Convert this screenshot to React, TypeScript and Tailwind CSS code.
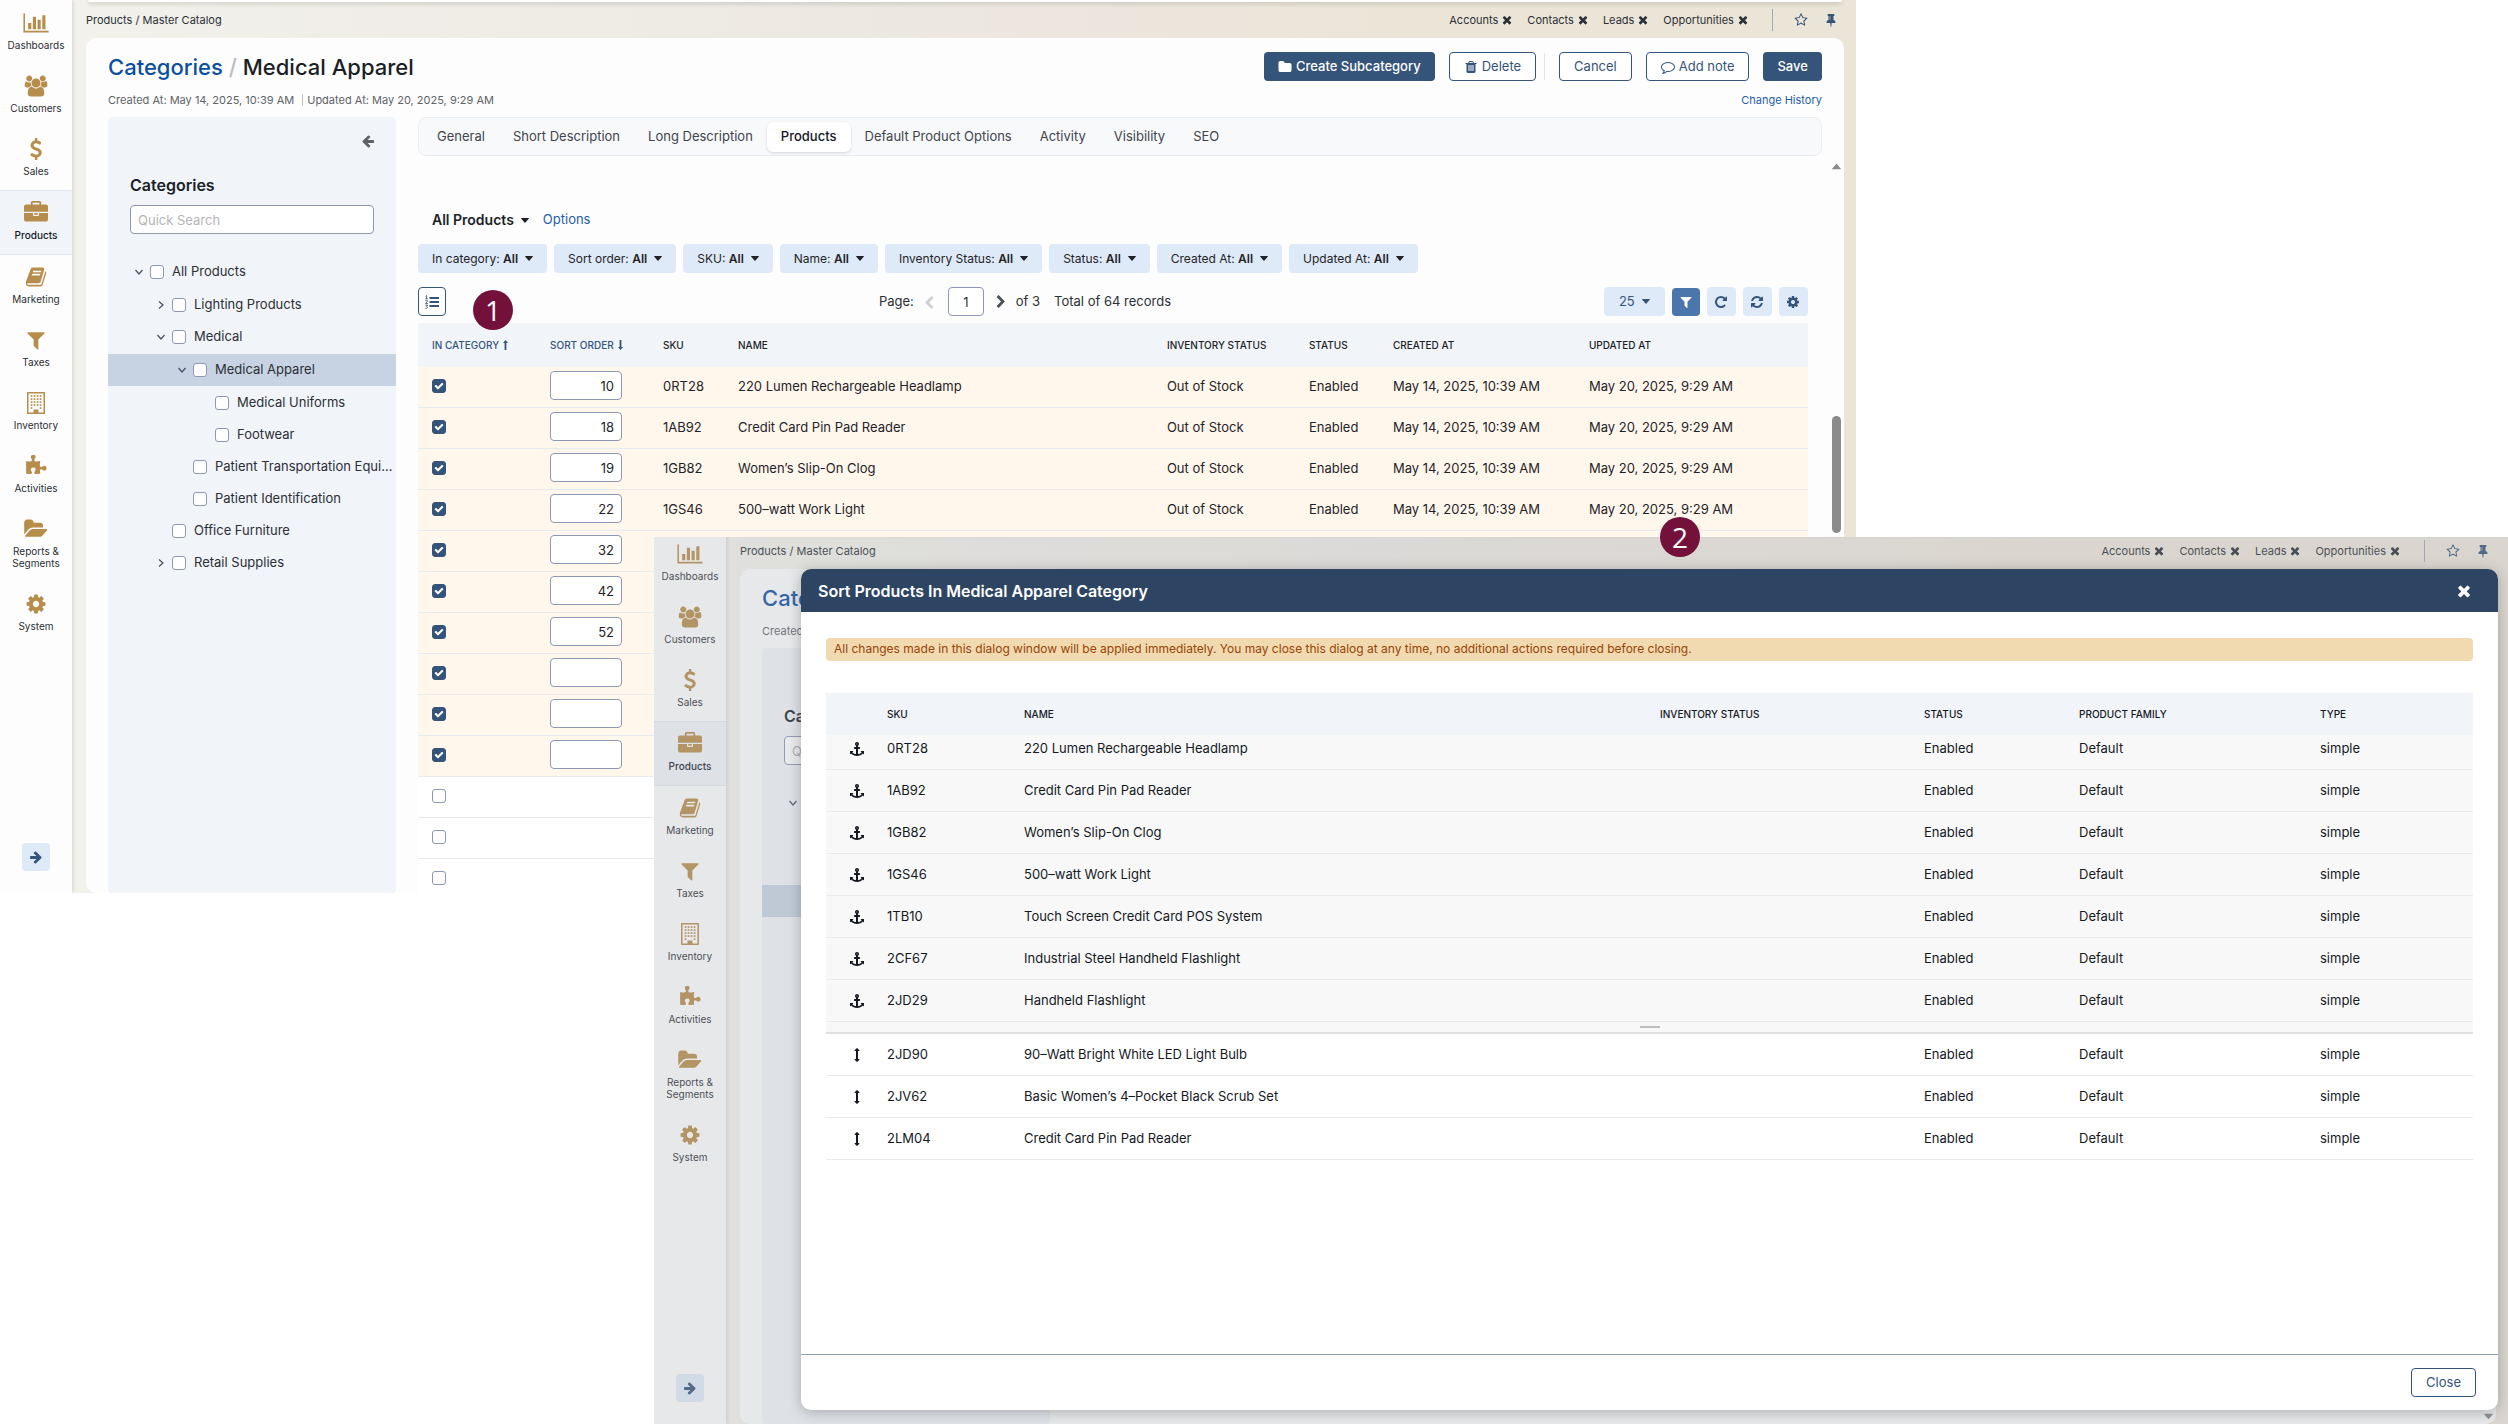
import React, { useId } from "react";

/* ---------- icons ---------- */

type GlyphName =
  | "chart" | "users" | "usd" | "briefcase" | "book" | "filter" | "puzzle" | "folderOpen" | "cog"
  | "arrow" | "close" | "pin" | "trash" | "anchor" | "repeat" | "refresh" | "star" | "folder"
  | "comment" | "chevron" | "arrowsV" | "check";

const GLYPHS: Record<GlyphName, { box: string; d: string }> = {
  chart: { box: "0 0 2048 1792", d: "M640 896v512h-256v-512h256zm384-512v1024h-256v-1024h256zm1024 1152v128h-2048v-1536h128v1408h1920zm-640-896v768h-256v-768h256zm384-384v1152h-256v-1152h256z" },
  users: { box: "0 0 2048 1792", d: "M657 896q-162 5-265 128h-134q-82 0-138-40.5t-56-118.5q0-353 124-353 6 0 43.5 21t97.5 42.5 119 21.5q67 0 133-23-5 37-5 66 0 159 90 290zm1071 637q0 120-73 189.5t-194 69.5h-874q-121 0-194-69.5t-73-189.5q0-53 3.5-103.5t14-109 26.5-108.5 43-97.5 62-81 85.5-53.5 111.5-20q10 0 43 21.5t73 48 107 48 135 21.5 135-21.5 107-48 73-48 43-21.5q61 0 111.5 20t85.5 53.5 62 81 43 97.5 26.5 108.5 14 109 3.5 103.5zm-1024-1277q0 106-75 181t-181 75-181-75-75-181 75-181 181-75 181 75 75 181zm704 384q0 159-112.5 271.5t-271.5 112.5-271.5-112.5-112.5-271.5 112.5-271.5 271.5-112.5 271.5 112.5 112.5 271.5zm576 225q0 78-56 118.5t-138 40.5h-134q-103-123-265-128 90-131 90-290 0-29-5-66 66 23 133 23 59 0 119-21.5t97.5-42.5 43.5-21q124 0 124 353zm-128-609q0 106-75 181t-181 75-181-75-75-181 75-181 181-75 181 75 75 181z" },
  usd: { box: "0 0 1792 1792", d: "M1362 1185q0 153-99.5 263.5t-258.5 136.5v175q0 14-9 23t-23 9h-135q-13 0-22.5-9.5t-9.5-22.5v-175q-66-9-127.5-31t-101.5-44.5-74-48-46.5-37.5-17.5-18q-17-21-2-41l103-135q7-10 23-12 15-2 24 9l2 2q113 99 243 125 37 8 74 8 81 0 142.5-43t61.5-122q0-28-15-53t-33.5-42-58.5-37.5-66-32-80-32.5q-39-16-61.5-25t-61.5-26.5-62.5-31-56.5-35.5-53.5-42.5-43.5-49-35.5-58-21-66.5-8.5-78q0-138 98-242t255-134v-180q0-13 9.5-22.5t22.5-9.5h135q14 0 23 9t9 23v176q57 6 110.5 23t87 33.5 63.5 37.5 39 29 15 14q17 18 5 38l-81 146q-8 15-23 16-14 3-27-7-3-3-14.5-12t-39-26.5-58.5-32-74.5-26-85.5-11.5q-95 0-155 43t-60 111q0 26 8.5 48t29.5 41.5 39.5 33 56 31 60.5 27 70 27.5q53 20 81 31.5t76 35 75.5 42.5 62 50 53 63.5 31.5 76.5 13 94z" },
  briefcase: { box: "0 0 1792 1792", d: "M640 256h512v-128h-512v128zm1152 640v480q0 66-47 113t-113 47h-1472q-66 0-113-47t-47-113v-480h672v160q0 26 19 45t45 19h320q26 0 45-19t19-45v-160h672zm-768 0v128h-256v-128h256zm768-480v384h-1792v-384q0-66 47-113t113-47h352v-160q0-40 28-68t68-28h576q40 0 68 28t28 68v160h352q66 0 113 47t47 113z" },
  book: { box: "0 0 1792 1792", d: "M1703 478q40 57 18 129l-275 906q-19 64-76.5 107.5t-122.5 43.5h-923q-77 0-148.5-53.5t-99.5-131.5q-24-67-2-127 0-4 3-27t4-37q1-8-3-21.5t-3-19.5q2-11 8-21t16.5-23.5 16.5-23.5q23-38 45-91.5t30-91.5q3-10 .5-30t-.5-28q3-11 17-28t17-23q21-36 42-92t25-90q1-9-2.5-32t.5-28q4-13 22-30.5t22-22.5q19-26 42.5-84.5t27.5-96.5q1-8-3-25.5t-2-26.5q2-8 9-18t18-23 17-21q8-12 16.5-30.5t15-35 16-36 19.5-32 26.5-23.5 36-11.5 47.5 5.5l-1 3q38-9 51-9h761q74 0 114 56t18 130l-274 906q-36 119-71.5 153.5t-128.5 34.5h-869q-27 0-38 15-11 16-1 43 24 70 144 70h923q29 0 56-15.5t35-41.5l300-987q7-22 5-57 38 15 59 43zm-1064 2q-4 13 2 22.5t20 9.5h608q13 0 25.5-9.5t16.5-22.5l21-64q4-13-2-22.5t-20-9.5h-608q-13 0-25.5 9.5t-16.5 22.5zm-83 256q-4 13 2 22.5t20 9.5h608q13 0 25.5-9.5t16.5-22.5l21-64q4-13-2-22.5t-20-9.5h-608q-13 0-25.5 9.5t-16.5 22.5z" },
  filter: { box: "0 0 1792 1792", d: "M1595 295q17 41-14 70l-493 493v742q0 42-39 59-13 5-25 5-27 0-45-19l-256-256q-19-19-19-45v-486l-493-493q-31-29-14-70 17-39 59-39h1280q42 0 59 39z" },
  puzzle: { box: "0 0 1792 1792", d: "M1755 1083q0 81-44.5 135t-123.5 54q-41 0-77.5-17.5t-59-38-56.5-38-71-17.5q-110 0-110 124 0 39 16 115t15 115v5q-22 0-33 1-34 3-97.5 11.5t-115.5 13.5-98 5q-61 0-103-26.5t-42-83.5q0-37 17.5-71t38-56.5 38-59 17.5-77.5q0-79-54-123.5t-135-44.5q-84 0-143 45.5t-59 127.5q0 43 15 83t33.5 64.5 33.5 53 15 50.5q0 45-46 89-37 35-117 35-95 0-245-24-9-2-27.5-4t-27.5-4l-13-2q-1 0-3-1-2 0-2-1v-1024q2 1 17.5 3.5t34 5 21.5 3.5q150 24 245 24 80 0 117-35 46-44 46-89 0-22-15-50.5t-33.5-53-33.5-64.5-15-83q0-82 59-127.5t144-45.5q80 0 134 44.5t54 123.5q0 41-17.5 77.5t-38 59-38 56.5-17.5 71q0 57 42 83.5t103 26.5q64 0 180-15t163-17v2q-1 2-3.5 17.5t-5 34-3.5 21.5q-24 150-24 245 0 80 35 117 44 46 89 46 22 0 50.5-15t53-33.5 64.5-33.5 83-15q82 0 127.5 59t45.5 143z" },
  folderOpen: { box: "0 0 1920 1792", d: "M1879 952q0 31-31 66l-336 396q-43 51-120.5 86.5t-143.5 35.5h-1088q-34 0-60.5-13t-26.5-43q0-31 31-66l336-396q43-51 120.5-86.5t143.5-35.5h1088q34 0 60.5 13t26.5 43zm-343-344v160h-832q-94 0-197 47.5t-164 119.5l-337 396-5 6q0-4-.5-12.5t-.5-12.5v-960q0-92 66-158t158-66h320q92 0 158 66t66 158v32h544q92 0 158 66t66 158z" },
  cog: { box: "0 0 1792 1792", d: "M1152 896q0-106-75-181t-181-75-181 75-75 181 75 181 181 75 181-75 75-181zm512-109v222q0 12-8 23t-20 13l-185 28q-19 54-39 91 35 50 107 138 10 12 10 25t-9 23q-27 37-99 108t-94 71q-12 0-26-9l-138-108q-44 23-91 38-16 136-29 186-7 28-36 28h-222q-14 0-24.5-8.5t-11.5-21.5l-28-184q-49-16-90-37l-141 107q-10 9-25 9-14 0-25-11-126-114-165-168-7-10-7-23 0-12 8-23 15-21 51-66.5t54-70.5q-27-50-41-99l-183-27q-13-2-21-12.5t-8-23.5v-222q0-12 8-23t19-13l186-28q14-46 39-92-40-57-107-138-10-12-10-24 0-10 9-23 26-36 98.5-107.5t94.5-71.5q13 0 26 10l138 107q44-23 91-38 16-136 29-186 7-28 36-28h222q14 0 24.5 8.5t11.5 21.5l28 184q49 16 90 37l142-107q9-9 24-9 13 0 25 10 129 119 165 170 7 8 7 22 0 12-8 23-15 21-51 66.5t-54 70.5q26 50 41 98l183 28q13 2 21 12.5t8 23.5z" },
  arrow: { box: "0 0 1792 1792", d: "M1600 960q0 54-37 91l-651 651q-39 37-91 37-51 0-90-37l-75-75q-38-38-38-91t38-91l293-293h-704q-52 0-84.5-37.5t-32.5-90.5v-128q0-53 32.5-90.5t84.5-37.5h704l-293-294q-38-36-38-90t38-90l75-75q38-38 90-38 53 0 91 38l651 651q37 35 37 90z" },
  close: { box: "180 200 1432 1432", d: "M1490 1322q0 40-28 68l-136 136q-28 28-68 28t-68-28l-294-294-294 294q-28 28-68 28t-68-28l-136-136q-28-28-28-68t28-68l294-294-294-294q-28-28-28-68t28-68l136-136q28-28 68-28t68 28l294 294 294-294q28-28 68-28t68 28l136 136q28 28 28 68t-28 68l-294 294 294 294q28 28 28 68z" },
  pin: { box: "0 0 1536 1792", d: "M800 864v-448q0-14-9-23t-23-9-23 9-9 23v448q0 14 9 23t23 9 23-9 9-23zm672 352q0 26-19 45t-45 19h-429l-51 483q-2 12-10.5 20.5t-20.5 8.5h-1q-27 0-32-27l-76-485h-404q-26 0-45-19t-19-45q0-123 78.5-221.5t177.5-98.5v-512q-52 0-90-38t-38-90 38-90 90-38h640q52 0 90 38t38 90-38 90-90 38v512q99 0 177.5 98.5t78.5 221.5z" },
  trash: { box: "0 0 1792 1792", d: "M704 1376v-704q0-14-9-23t-23-9h-64q-14 0-23 9t-9 23v704q0 14 9 23t23 9h64q14 0 23-9t9-23zm256 0v-704q0-14-9-23t-23-9h-64q-14 0-23 9t-9 23v704q0 14 9 23t23 9h64q14 0 23-9t9-23zm256 0v-704q0-14-9-23t-23-9h-64q-14 0-23 9t-9 23v704q0 14 9 23t23 9h64q14 0 23-9t9-23zm-544-992h448l-48-117q-7-9-17-11h-317q-10 2-17 11zm928 32v64q0 14-9 23t-23 9h-96v948q0 83-47 143.5t-113 60.5h-832q-66 0-113-58.5t-47-141.5v-952h-96q-14 0-23-9t-9-23v-64q0-14 9-23t23-9h309l70-167q15-37 54-63t79-26h320q40 0 79 26t54 63l70 167h309q14 0 23 9t9 23z" },
  anchor: { box: "0 0 1792 1792", d: "M960 256q0-26-19-45t-45-19-45 19-19 45 19 45 45 19 45-19 19-45zm832 928v352q0 22-20 30-8 2-12 2-13 0-23-9l-93-93q-119 143-318.5 226.5t-429.5 83.5-429.5-83.5-318.5-226.5l-93 93q-9 9-23 9-4 0-12-2-20-8-20-30v-352q0-14 9-23t23-9h352q22 0 30 20 8 19-7 35l-100 100q67 91 189.5 153.5t271.5 82.5v-647h-192q-26 0-45-19t-19-45v-128q0-26 19-45t45-19h192v-163q-58-34-93-92.5t-35-128.5q0-106 75-181t181-75 181 75 75 181q0 70-35 128.5t-93 92.5v163h192q26 0 45 19t19 45v128q0 26-19 45t-45 19h-192v647q149-20 271.5-82.5t189.5-153.5l-100-100q-15-16-7-35 8-20 30-20h352q14 0 23 9t9 23z" },
  repeat: { box: "0 0 1792 1792", d: "M1664 256v448q0 26-19 45t-45 19h-448q-42 0-59-40-17-39 14-69l138-138q-148-137-349-137-104 0-198.5 40.5t-163.5 109.5-109.5 163.5-40.5 198.5 40.5 198.5 109.5 163.5 163.5 109.5 198.5 40.5q119 0 225-52t179-147q7-10 23-12 15 0 25 9l137 138q9 8 9.5 20.5t-7.5 22.5q-109 132-264 204.5t-327 72.5q-156 0-298-61t-245-164-164-245-61-298 61-298 164-245 245-164 298-61q147 0 284.5 55.5t244.5 156.5l130-129q29-31 70-14 39 17 39 59z" },
  refresh: { box: "0 0 1792 1792", d: "M1639 1056q0 5-1 7-64 268-268 434.5t-478 166.5q-146 0-282.5-55t-243.5-157l-129 129q-19 19-45 19t-45-19-19-45v-448q0-26 19-45t45-19h448q26 0 45 19t19 45-19 45l-137 137q71 66 161 102t187 36q134 0 250-65t186-179q11-17 53-117 8-23 30-23h192q13 0 22.5 9.5t9.5 22.5zm25-800v448q0 26-19 45t-45 19h-448q-26 0-45-19t-19-45 19-45l138-138q-148-137-349-137-134 0-250 65t-186 179q-11 17-53 117-8 23-30 23h-199q-13 0-22.5-9.5t-9.5-22.5v-7q65-268 270-434.5t480-166.5q146 0 284 55.5t245 156.5l130-129q19-19 45-19t45 19 19 45z" },
  star: { box: "0 0 1792 1792", d: "M1201 1004l306-297-422-62-189-382-189 382-422 62 306 297-73 421 378-199 377 199zm527-357q0 22-26 48l-363 354 86 500q1 7 1 20 0 50-41 50-19 0-40-12l-449-236-449 236q-22 12-40 12-21 0-31.5-14.5t-10.5-35.5q0-6 2-20l86-500-364-354q-25-27-25-48 0-37 56-46l502-73 225-455q19-41 49-41t49 41l225 455 502 73q56 9 56 46z" },
  folder: { box: "0 0 1792 1792", d: "M1728 608v704q0 92-66 158t-158 66h-1216q-92 0-158-66t-66-158v-960q0-92 66-158t158-66h320q92 0 158 66t66 158v32h672q92 0 158 66t66 158z" },
  comment: { box: "0 0 1792 1792", d: "M896 384q-204 0-381.5 69.5t-282 187.5-104.5 255q0 112 71.5 213.5t201.5 175.5l87 50-27 96q-24 91-70 172 152-63 275-171l43-38 57 6q69 8 130 8 204 0 381.5-69.5t282-187.5 104.5-255-104.5-255-282-187.5-381.5-69.5zm896 512q0 174-120 321.5t-326 233-450 85.5q-70 0-145-8-198 175-460 242-49 14-114 22h-5q-15 0-27-10.5t-16-27.5v-1q-3-4-.5-12t2-10 4.5-9.5l6-9 7-8.5 8-9q7-8 31-34.5t34.5-38 31-39.5 32.5-51 27-59 26-76q-157-89-247.5-220t-90.5-281q0-130 71-248.5t191-204.5 286-136.5 348-50.5q244 0 450 85.5t326 233 120 321.5z" },
  chevron: { box: "256 0 1280 1792", d: "M1363 877l-742 742q-19 19-45 19t-45-19l-166-166q-19-19-19-45t19-45l531-531-531-531q-19-19-19-45t19-45l166-166q19-19 45-19t45 19l742 742q19 19 19 45t-19 45z" },
  arrowsV: { box: "0 0 1792 1792", d: "M1216 320q0 26-19 45t-45 19h-128v1024h128q26 0 45 19t19 45-19 45l-256 256q-19 19-45 19t-45-19l-256-256q-19-19-19-45t19-45 45-19h128v-1024h-128q-26 0-45-19t-19-45 19-45l256-256q19-19 45-19t45 19l256 256q19 19 19 45z" },
  check: { box: "0 0 1792 1792", d: "M1671 566q0 40-28 68l-724 724-136 136q-28 28-68 28t-68-28l-136-136-362-362q-28-28-28-68t28-68l136-136q28-28 68-28t68 28l294 295 656-657q28-28 68-28t68 28l136 136q28 28 28 68z" },
};

function Glyph({ name, className = "" }: { name: GlyphName; className?: string }) {
  const g = GLYPHS[name];
  return (
    <svg viewBox={g.box} fill="currentColor" aria-hidden="true" className={`shrink-0 ${className}`}>
      <path d={g.d} />
    </svg>
  );
}

function Building({ className = "" }: { className?: string }) {
  const cols = [4, 7, 10, 13];
  const rows = [4, 7, 10, 13];
  return (
    <svg viewBox="0 0 18 22" fill="currentColor" aria-hidden="true" className={`shrink-0 ${className}`}>
      <path fillRule="evenodd" d="M0.8 0h16.4q.8 0 .8.8v20.4q0 .8-.8.8H.8q-.8 0-.8-.8V.8Q0 0 .8 0zM1.5 1.5v19h5v-3h5v3h5v-19z" />
      {rows.map((y) => cols.map((x) => <rect key={`${x}-${y}`} x={x - 0.3} y={y - 0.8} width="1.7" height="1.7" />))}
      <rect x="3.7" y="15.2" width="1.7" height="1.7" />
      <rect x="12.7" y="15.2" width="1.7" height="1.7" />
    </svg>
  );
}

function NumberedList({ className = "" }: { className?: string }) {
  return (
    <svg viewBox="0 0 14 14" fill="none" stroke="currentColor" aria-hidden="true" className={`shrink-0 ${className}`}>
      <path strokeWidth="2" d="M4.5 3H14M4.5 7H14M4.5 11H14" />
      <path strokeWidth="0.9" d="M0.6 1.2L1.6 0.6V3.6M0.4 3.7H2.8M0.4 5.6Q1.6 4.7 2.4 5.6Q2.6 6.6 0.5 8.4H2.9M0.4 10.1H2.5L1.5 11.4Q2.7 11.7 2.4 12.7Q1.8 13.8 0.4 13.2" />
    </svg>
  );
}

function Caret({ className = "" }: { className?: string }) {
  return (
    <svg viewBox="0 0 8 5" fill="currentColor" aria-hidden="true" className={`h-[5px] w-2 shrink-0 ${className}`}>
      <path d="M0.6 0h6.8q.9 0 .3.8L4.5 4.6q-.5.5-1 0L.3.8Q-.3 0 .6 0z" />
    </svg>
  );
}

function SortArrow({ up = false }: { up?: boolean }) {
  return (
    <svg viewBox="0 0 5 10" fill="currentColor" aria-hidden="true" className={`h-2.5 w-[5px] shrink-0 ${up ? "" : "rotate-180"}`}>
      <path d="M2.5 0L5 3H3.4V10H1.6V3H0z" />
    </svg>
  );
}

/* ---------- small controls ---------- */

function Tick({ label, checked = false }: { label: string; checked?: boolean }) {
  return (
    <span className="relative block h-3.5 w-3.5 shrink-0">
      <input
        type="checkbox"
        aria-label={label}
        defaultChecked={checked}
        className="peer block h-3.5 w-3.5 appearance-none rounded-[3px] border border-[#8e97b3] bg-white checked:border-[#34547a] checked:bg-[#34547a]"
      />
      <Glyph name="check" className="pointer-events-none absolute left-0.5 top-0.5 hidden h-2.5 w-2.5 text-white peer-checked:block" />
    </span>
  );
}

const outline =
  "flex h-[29px] items-center justify-center gap-1 rounded border border-[#34547a] bg-white px-3.5 text-[13px] text-[#34547a]";
const solid =
  "flex h-[29px] items-center justify-center gap-1 rounded bg-[#34547a] px-3.5 text-[13px] font-medium text-white";
const soft = "flex h-[29px] w-[29px] items-center justify-center rounded bg-[#dfeaf8] text-[#34547a]";

/* ---------- sidebar ---------- */

const MENU: { label: string; icon: GlyphName | "building"; size: string; active?: boolean }[] = [
  { label: "Dashboards", icon: "chart", size: "h-[22px] w-[26px]" },
  { label: "Customers", icon: "users", size: "h-[22px] w-6" },
  { label: "Sales", icon: "usd", size: "h-[22px] w-[22px]" },
  { label: "Products", icon: "briefcase", size: "h-6 w-6", active: true },
  { label: "Marketing", icon: "book", size: "h-[22px] w-[22px]" },
  { label: "Taxes", icon: "filter", size: "h-[22px] w-[22px]" },
  { label: "Inventory", icon: "building", size: "h-[22px] w-[18px]" },
  { label: "Activities", icon: "puzzle", size: "h-[22px] w-[22px]" },
  { label: "Reports & Segments", icon: "folderOpen", size: "h-[22px] w-6" },
  { label: "System", icon: "cog", size: "h-[22px] w-[22px]" },
];

function Sidebar() {
  return (
    <nav aria-label="Main menu" className="z-10 flex w-[72px] shrink-0 flex-col bg-[#fdfdfd] pt-px shadow-[1px_0_4px_rgba(0,0,0,0.12)]">
      {MENU.map((m) => (
        <a
          key={m.label}
          href={`#${m.label.split(" ")[0].toLowerCase()}`}
          className={`flex flex-col items-center px-1 pb-[13px] pt-3 text-center text-[10px] leading-3 ${
            m.active
              ? "border-y border-[#e3e8f0] bg-[#f1f4f9] font-medium text-[#14181f]"
              : "text-[#2b2f36]"
          }`}
        >
          <span className="flex h-5 items-center justify-center text-[#b68d4b]">
            {m.icon === "building" ? <Building className={m.size} /> : <Glyph name={m.icon} className={m.size} />}
          </span>
          <span className="mt-1.5">{m.label}</span>
        </a>
      ))}
      <button type="button" aria-label="Expand menu" className="mx-auto mb-[22px] mt-auto flex h-7 w-7 items-center justify-center rounded bg-[#dfeaf8] text-[#34547a]">
        <Glyph name="arrow" className="h-3.5 w-3.5" />
      </button>
    </nav>
  );
}

/* ---------- category tree ---------- */

type Node = { name: string; open?: boolean; closed?: boolean; current?: boolean; children?: Node[] };

const TREE: Node = {
  name: "All Products",
  open: true,
  children: [
    { name: "Lighting Products", closed: true },
    {
      name: "Medical",
      open: true,
      children: [
        { name: "Medical Apparel", open: true, current: true, children: [{ name: "Medical Uniforms" }, { name: "Footwear" }] },
        { name: "Patient Transportation Equi..." },
        { name: "Patient Identification" },
      ],
    },
    { name: "Office Furniture" },
    { name: "Retail Supplies", closed: true },
  ],
};

const INDENT = ["pl-[27px]", "pl-[49px]", "pl-[70px]", "pl-[92px]"];

function TreeNode({ node, depth }: { node: Node; depth: number }) {
  return (
    <li>
      <div className={`flex h-8 items-center ${INDENT[depth]} ${node.current ? "bg-[#c7d3e2]" : ""}`}>
        <span className="flex w-[15px] shrink-0 text-[#4a4f58]">
          {(node.open || node.closed) && (
            <svg viewBox="0 0 8 8" fill="none" stroke="currentColor" strokeWidth="1.2" aria-hidden="true" className={`h-2 w-2 ${node.closed ? "-rotate-90" : ""}`}>
              <path d="M0.5 2l3.5 4 3.5-4" />
            </svg>
          )}
        </span>
        <Tick label={node.name} />
        <a href="#category" className="ml-2 whitespace-nowrap text-[13px] text-[#2b2f36]">{node.name}</a>
      </div>
      {node.children && (
        <ul className="pt-px">
          {node.children.map((c) => (
            <TreeNode key={c.name} node={c} depth={depth + 1} />
          ))}
        </ul>
      )}
    </li>
  );
}

function CategoryPanel() {
  return (
    <aside className="flex w-72 shrink-0 flex-col rounded bg-[#f1f4f9]">
      <button type="button" aria-label="Collapse panel" className="ml-auto mr-[21px] mt-[18px] text-[#5f6368]">
        <Glyph name="arrow" className="h-3.5 w-3.5 rotate-180" />
      </button>
      <h2 className="mx-[22px] mt-[26px] text-base font-semibold leading-5 text-[#1b1f27]">Categories</h2>
      <input
        type="search"
        aria-label="Quick Search"
        placeholder="Quick Search"
        className="mx-[22px] mt-2.5 h-[29px] rounded border border-[#8e97b3] bg-white px-[7px] text-[13px] placeholder:text-[#b5b5b5]"
      />
      <ul className="mt-[22px]">
        <TreeNode node={TREE} depth={0} />
      </ul>
    </aside>
  );
}

/* ---------- product grid ---------- */

type Product = { sku: string; name: string };

const PRODUCTS: Product[] = [
  { sku: "0RT28", name: "220 Lumen Rechargeable Headlamp" },
  { sku: "1AB92", name: "Credit Card Pin Pad Reader" },
  { sku: "1GB82", name: "Women’s Slip-On Clog" },
  { sku: "1GS46", name: "500–watt Work Light" },
  { sku: "1TB10", name: "Touch Screen Credit Card POS System" },
  { sku: "2CF67", name: "Industrial Steel Handheld Flashlight" },
  { sku: "2JD29", name: "Handheld Flashlight" },
  { sku: "2JD90", name: "90–Watt Bright White LED Light Bulb" },
  { sku: "2JV62", name: "Basic Women’s 4–Pocket Black Scrub Set" },
  { sku: "2LM04", name: "Credit Card Pin Pad Reader" },
];

const SORT_ORDERS = ["10", "18", "19", "22", "32", "42", "52", "", "", ""];
const LOADED_ROWS = 4;

const FILTERS = ["In category", "Sort order", "SKU", "Name", "Inventory Status", "Status", "Created At", "Updated At"];
const TABS = ["General", "Short Description", "Long Description", "Products", "Default Product Options", "Activity", "Visibility", "SEO"];

function Toolbar() {
  const pageSize = useId();
  const page = useId();
  return (
    <div className="mt-3.5 flex items-center justify-between text-[13px] text-[#2b2f36]">
      <button type="button" aria-label="Sort products" className="flex h-[29px] w-7 items-center justify-center rounded border border-[#34547a] bg-white text-[#34547a]">
        <NumberedList className="h-3.5 w-3.5" />
      </button>
      <div className="flex items-center">
        <label htmlFor={page}>Page:</label>
        <button type="button" aria-label="Previous page" className="ml-2.5 text-[#cfcfcf]">
          <Glyph name="chevron" className="h-3.5 w-2.5 rotate-180" />
        </button>
        <input id={page} defaultValue="1" className="ml-3.5 h-[29px] w-9 rounded border border-[#8e97b3] bg-white text-center" />
        <button type="button" aria-label="Next page" className="ml-3 text-[#4a4f58]">
          <Glyph name="chevron" className="h-3.5 w-2.5" />
        </button>
        <span className="ml-2.5">of 3</span>
        <span className="ml-3.5">Total of 64 records</span>
      </div>
      <div className="flex items-center gap-[7px]">
        <label htmlFor={pageSize} className="sr-only">Records per page</label>
        <span className="relative flex items-center">
          <select id={pageSize} defaultValue="25" className="h-[29px] w-[61px] appearance-none rounded bg-[#dfeaf8] pl-[15px] text-[13px] text-[#34547a]">
            <option>25</option>
          </select>
          <Caret className="pointer-events-none absolute right-[15px] text-[#34547a]" />
        </span>
        <button type="button" aria-label="Filters" className="flex h-7 w-7 items-center justify-center rounded-sm bg-[#4a76ab] text-white">
          <Glyph name="filter" className="h-3.5 w-3.5" />
        </button>
        <button type="button" aria-label="Refresh" className={soft}><Glyph name="repeat" className="h-3.5 w-3.5" /></button>
        <button type="button" aria-label="Reset" className={soft}><Glyph name="refresh" className="h-3.5 w-3.5" /></button>
        <button type="button" aria-label="Grid settings" className={soft}><Glyph name="cog" className="h-3.5 w-3.5" /></button>
      </div>
    </div>
  );
}

function ProductGrid() {
  const cell = "border-b border-[#e8ebee] pl-3.5 text-left";
  return (
    <table className="mt-[7px] w-full table-fixed border-separate border-spacing-0 text-[13px] text-[#1f2329]">
      <colgroup>
        <col className="w-[118px]" />
        <col className="w-[113px]" />
        <col className="w-[75px]" />
        <col />
        <col className="w-[142px]" />
        <col className="w-[84px]" />
        <col className="w-[196px]" />
        <col className="w-[233px]" />
      </colgroup>
      <thead>
        <tr className="h-11 bg-[#f1f4f9] text-[10px] uppercase text-[#1b1f27]">
          <th className="pl-3.5 text-left font-medium text-[#34547a]"><span className="flex items-center gap-1 whitespace-nowrap">In category <SortArrow up /></span></th>
          <th className="pl-3.5 text-left font-medium text-[#34547a]"><span className="flex items-center gap-1 whitespace-nowrap">Sort order <SortArrow /></span></th>
          {["SKU", "Name", "Inventory status", "Status", "Created at", "Updated at"].map((h) => (
            <th key={h} className="pl-3.5 text-left font-medium">{h}</th>
          ))}
        </tr>
      </thead>
      <tbody>
        {SORT_ORDERS.map((order, i) => (
          <tr key={i} className="h-[41px] bg-[#fff7ec]">
            <td className={`${cell} align-top pt-3`}><Tick label={`Row ${i + 1} in category`} checked /></td>
            <td className={`${cell} align-top pt-1`}>
              <input
                aria-label={`Row ${i + 1} sort order`}
                defaultValue={order}
                className="block h-[29px] w-[72px] rounded border border-[#8e97b3] bg-white pr-[7px] text-right"
              />
            </td>
            {i < LOADED_ROWS ? (
              <>
                <td className={cell}>{PRODUCTS[i].sku}</td>
                <td className={cell}>{PRODUCTS[i].name}</td>
                <td className={cell}>Out of Stock</td>
                <td className={cell}>Enabled</td>
                <td className={cell}>May 14, 2025, 10:39 AM</td>
                <td className={cell}>May 20, 2025, 9:29 AM</td>
              </>
            ) : (
              <td className={cell} colSpan={6} />
            )}
          </tr>
        ))}
        {[11, 12, 13].map((n) => (
          <tr key={n} className="h-[41px] bg-white">
            <td className={`${cell} align-top pt-3`}><Tick label={`Row ${n} in category`} /></td>
            <td className={cell} colSpan={7} />
          </tr>
        ))}
      </tbody>
    </table>
  );
}

function ProductsTab() {
  return (
    <div className="min-w-0 flex-1 pt-[54px]">
      <div className="ml-3.5 flex h-5 items-center">
        <button type="button" className="flex items-center gap-[7px] text-sm font-semibold text-[#1b1f27]">All Products <Caret /></button>
        <a href="#options" className="ml-3.5 text-[13px] text-[#1f5da8]">Options</a>
      </div>
      <div className="mt-3.5 flex gap-[7px]">
        {FILTERS.map((f) => (
          <button key={f} type="button" className="flex h-[29px] items-center whitespace-nowrap rounded bg-[#dfeaf8] px-3.5 text-xs text-[#1f2329]">
            {f}:&nbsp;<b className="font-semibold">All</b>
            <Caret className="ml-[7px]" />
          </button>
        ))}
      </div>
      <Toolbar />
      <ProductGrid />
    </div>
  );
}

/* ---------- application window ---------- */

function PageActions() {
  return (
    <>
      <button type="button" className={solid}><Glyph name="folder" className="h-3.5 w-3.5" />Create Subcategory</button>
      <button type="button" className={`${outline} ml-3.5`}><Glyph name="trash" className="h-3.5 w-3.5" />Delete</button>
      <span className="ml-2 mr-3.5 h-[27px] w-px bg-[#e1e4ea]" />
      <button type="button" className={outline}>Cancel</button>
      <button type="button" className={`${outline} ml-3.5`}><Glyph name="comment" className="h-3.5 w-3.5" />Add note</button>
      <button type="button" className={`${solid} ml-3.5`}>Save</button>
    </>
  );
}

/* `background` is the inert page behind an open dialog: chrome and category panel only. */
function CatalogApp({ background = false }: { background?: boolean }) {
  return (
    <div className="flex h-[893px] overflow-hidden bg-linear-to-r from-[#f3f2ec] via-[#ece7e1] to-[#ebe5d8] to-75%">
      <Sidebar />
      <div className="flex min-w-0 flex-1 flex-col pl-3.5 pr-3">
        <div className="mx-0.5 h-0.5 shrink-0 rounded-b-lg bg-white shadow-[0_1px_5px_rgba(0,0,0,0.3)]" />
        <div className="flex h-9 shrink-0 items-center text-[11px] text-[#2b2f36]">
          <nav aria-label="Breadcrumb" className="mr-auto">Products / Master Catalog</nav>
          <div className="flex items-center gap-[15px]">
            {["Accounts", "Contacts", "Leads", "Opportunities"].map((t) => (
              <span key={t} className="flex items-center gap-1">
                <a href="#pinned">{t}</a>
                <button type="button" aria-label={`Close ${t}`}><Glyph name="close" className="h-2.5 w-2.5" /></button>
              </span>
            ))}
          </div>
          <span className="ml-6 h-[22px] w-px bg-[#9fa8bd]" />
          <button type="button" aria-label="Add to favorites" className="ml-[21px] text-[#34547a]"><Glyph name="star" className="h-3.5 w-3.5" /></button>
          <button type="button" aria-label="Pin page" className="ml-4 mr-2 text-[#34547a]"><Glyph name="pin" className="h-3.5 w-3" /></button>
        </div>

        <main className="flex min-h-0 flex-1 flex-col rounded-[10px] bg-[#fdfdfd] px-[22px] pt-3.5">
          <div className="flex h-[29px] shrink-0 items-center">
            <h1 className="mr-auto text-[22px] font-medium leading-7 text-[#1b1f27]">
              <a href="#categories" className="text-[#0a4fa0]">Categories</a>
              {!background && <><span className="text-[#b9bcc2]"> / </span>Medical Apparel</>}
            </h1>
            {!background && <PageActions />}
          </div>
          <div className="flex h-9 shrink-0 items-center pt-0.5 text-[11px] text-[#5f6368]">
            {background ? (
              <span>Created At:</span>
            ) : (
              <>
                <span className="border-r border-[#b9bcc2] pr-2 leading-3">Created At: May 14, 2025, 10:39 AM</span>
                <span className="pl-1">Updated At: May 20, 2025, 9:29 AM</span>
                <a href="#history" className="ml-auto text-[#1f5da8]">Change History</a>
              </>
            )}
          </div>

          <div className="flex min-h-0 flex-1 gap-[22px]">
            <CategoryPanel />
            <div className="flex min-w-0 flex-1 flex-col">
              {!background && (
                <div role="tablist" className="flex h-[39px] shrink-0 items-center rounded-lg border border-[#e9ecf1] bg-[#f8f9fb] px-1">
                  {TABS.map((t) => (
                    <button
                      key={t}
                      type="button"
                      role="tab"
                      aria-selected={t === "Products"}
                      className={
                        t === "Products"
                          ? "h-[30px] rounded-md bg-white px-3.5 text-[13px] font-medium text-[#14181f] shadow-[0_1px_3px_rgba(0,0,0,0.15)]"
                          : "h-[30px] px-3.5 text-[13px] text-[#40444c]"
                      }
                    >
                      {t}
                    </button>
                  ))}
                </div>
              )}

              <div className="-mr-[22px] flex min-h-0 flex-1 justify-end overflow-hidden">
                {!background && <ProductsTab />}
                <div aria-hidden="true" className="flex w-9 shrink-0 flex-col items-end pb-1 pr-[3px] pt-[7px] text-[#8b8b8b]">
                  <Caret className="h-[7px] w-[9px] rotate-180" />
                  <span className="mt-[246px] h-[117px] w-[9px] rounded-full bg-[#8b8b8b]" />
                  <Caret className="mt-auto h-[7px] w-[9px]" />
                </div>
              </div>
            </div>
          </div>
        </main>
      </div>
    </div>
  );
}

/* ---------- sort dialog ---------- */

function SortRow({ p, pinned, first = false }: { p: Product; pinned: boolean; first?: boolean }) {
  const cell = `border-b border-[#e9eaeb] pl-3.5 text-left ${first ? "pb-[7px]" : ""}`;
  return (
    <tr className={`${first ? "h-[35px]" : "h-[42px]"} ${pinned ? "bg-[#f8f8f8]" : "bg-white"}`}>
      <td className={cell}>
        <Glyph name={pinned ? "anchor" : "arrowsV"} className="mx-auto block h-3.5 w-3.5 text-[#14181f]" />
      </td>
      <td className={cell}>{p.sku}</td>
      <td className={cell}>{p.name}</td>
      <td className={cell} />
      <td className={cell}>Enabled</td>
      <td className={cell}>Default</td>
      <td className={cell}>simple</td>
    </tr>
  );
}

function SortDialog() {
  const title = useId();
  return (
    <section
      role="dialog"
      aria-labelledby={title}
      className="absolute bottom-3.5 left-[147px] right-2.5 top-8 flex flex-col overflow-hidden rounded-[10px] bg-white shadow-[0_2px_14px_rgba(0,0,0,0.25)]"
    >
      <header className="flex h-[43px] shrink-0 items-center justify-between bg-[#2d4563] pl-[17px] pr-[27px] text-white">
        <h2 id={title} className="text-base font-semibold">Sort Products In Medical Apparel Category</h2>
        <button type="button" aria-label="Close dialog"><Glyph name="close" className="h-3.5 w-3.5" /></button>
      </header>
      <div className="flex-1 px-[25px] pt-[26px]">
        <p className="h-[23px] rounded-sm bg-[#f2dab0] px-2 text-xs leading-[22px] text-[#964408]">
          All changes made in this dialog window will be applied immediately. You may close this dialog at any time, no additional actions required before closing.
        </p>
        <table className="mt-8 w-full table-fixed border-separate border-spacing-0 text-[13px] text-[#14181f]">
          <colgroup>
            <col className="w-[47px]" />
            <col className="w-[137px]" />
            <col />
            <col className="w-[264px]" />
            <col className="w-[155px]" />
            <col className="w-[241px]" />
            <col className="w-[167px]" />
          </colgroup>
          <thead>
            <tr className="h-[42px] bg-[#f1f4f9] text-[10px] uppercase">
              <th aria-label="Drag handle" />
              {["SKU", "Name", "Inventory status", "Status", "Product family", "Type"].map((h) => (
                <th key={h} className="pl-3.5 text-left font-medium">{h}</th>
              ))}
            </tr>
          </thead>
          <tbody>
            {PRODUCTS.slice(0, 7).map((p, i) => (
              <SortRow key={p.sku} p={p} pinned first={i === 0} />
            ))}
            <tr className="h-3 bg-[#f8f8f8]">
              <td colSpan={7} className="border-b-2 border-[#e0e0e0]">
                <span className="mx-auto block h-0.5 w-5 bg-[#bdbdbd]" />
              </td>
            </tr>
            {PRODUCTS.slice(7).map((p) => (
              <SortRow key={p.sku} p={p} pinned={false} />
            ))}
          </tbody>
        </table>
      </div>
      <footer className="flex h-14 shrink-0 items-center justify-end border-t border-[#8f9cb5] pr-[22px]">
        <button type="button" className={outline}>Close</button>
      </footer>
    </section>
  );
}

function Badge({ children, className }: { children: React.ReactNode; className: string }) {
  return (
    <span className={`absolute z-30 flex h-10 w-10 items-center justify-center rounded-full bg-[#73113a] font-['Open_Sans',sans-serif] text-[28px] leading-none text-white ${className}`}>
      {children}
    </span>
  );
}

export default function App() {
  return (
    <div className="relative min-h-screen overflow-hidden bg-white font-[Inter,'Noto_Sans',sans-serif]">
      <div className="w-[74%]">
        <CatalogApp />
      </div>
      <div className="absolute bottom-0 left-[654px] right-0 top-[537px] z-20 overflow-hidden">
        <div className="-mt-1.5">
          <CatalogApp background />
        </div>
        <div className="absolute inset-0 z-20 bg-[#a9adb5]/25" />
        <div className="absolute inset-0 z-20">
          <SortDialog />
        </div>
      </div>
      <Badge className="left-[473px] top-[290px]">1</Badge>
      <Badge className="left-[1660px] top-[517px]">2</Badge>
    </div>
  );
}
